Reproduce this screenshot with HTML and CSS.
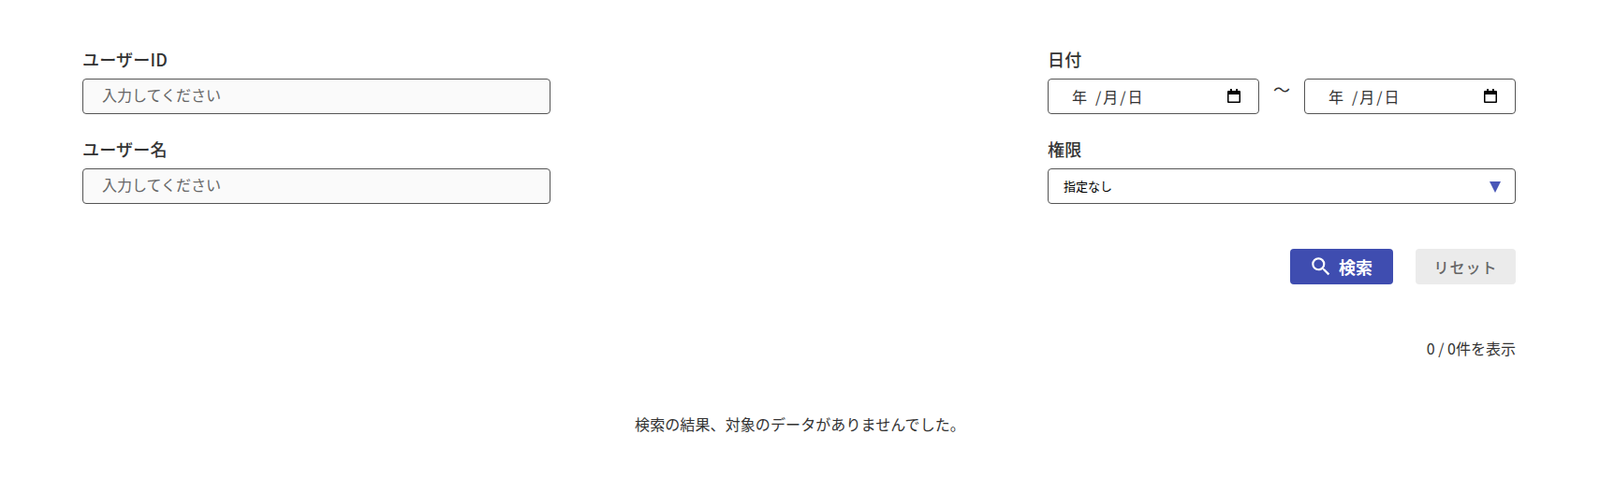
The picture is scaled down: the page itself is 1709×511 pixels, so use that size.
FILE: index.html
```html
<!DOCTYPE html>
<html lang="ja">
<head>
    <meta charset="UTF-8">
    <meta name="viewport" content="width=device-width, initial-scale=1.0">
    <title>ユーザー検索</title>
    <link rel="stylesheet" href="styles.css">
</head>
<body>
<main class="page">
    <form class="search-form">
        <div class="form-columns">
            <div class="form-column">
                <div class="form-group">
                    <label for="user-id">ユーザーID</label>
                    <input class="text-input" type="text" id="user-id" placeholder="入力してください">
                </div>
                <div class="form-group">
                    <label for="user-name">ユーザー名</label>
                    <input class="text-input" type="text" id="user-name" placeholder="入力してください">
                </div>
            </div>
            <div class="form-column">
                <div class="form-group">
                    <label>日付</label>
                    <div class="date-range">
                        <div class="date-input">
                            <span class="date-year">年</span><span class="date-slash">/</span><span>月</span><span class="date-slash">/</span><span>日</span>
                            <svg class="calendar-icon" viewBox="0 0 14 16" width="14" height="16" aria-hidden="true">
                                <path fill="currentColor" d="M3 0h2v2h4V0h2v2h2a1 1 0 0 1 1 1v11a1 1 0 0 1-1 1H1a1 1 0 0 1-1-1V3a1 1 0 0 1 1-1h2zM1.500 6v7.500h11V6z"/>
                            </svg>
                        </div>
                        <span class="date-sep">〜</span>
                        <div class="date-input">
                            <span class="date-year">年</span><span class="date-slash">/</span><span>月</span><span class="date-slash">/</span><span>日</span>
                            <svg class="calendar-icon" viewBox="0 0 14 16" width="14" height="16" aria-hidden="true">
                                <path fill="currentColor" d="M3 0h2v2h4V0h2v2h2a1 1 0 0 1 1 1v11a1 1 0 0 1-1 1H1a1 1 0 0 1-1-1V3a1 1 0 0 1 1-1h2zM1.500 6v7.500h11V6z"/>
                            </svg>
                        </div>
                    </div>
                </div>
                <div class="form-group">
                    <label for="role">権限</label>
                    <div class="select-wrap">
                        <select class="select-input" id="role">
                            <option>指定なし</option>
                        </select>
                        <span class="select-arrow"></span>
                    </div>
                </div>
            </div>
        </div>
        <div class="form-actions">
            <button class="btn btn-search" type="submit">
                <svg class="search-icon" viewBox="0 0 24 24" width="26" height="26" aria-hidden="true">
                    <path fill="currentColor" d="M15.500 14h-.79l-.28-.27A6.470 6.470 0 0 0 16 9.500 6.500 6.500 0 1 0 9.500 16c1.610 0 3.090-.59 4.230-1.570l.27.28v.79l5 4.990L20.490 19l-4.990-5zm-6 0C7.010 14 5 11.990 5 9.500S7.010 5 9.500 5 14 7.010 14 9.500 11.990 14 9.500 14z"/>
                </svg>
                <span>検索</span>
            </button>
            <button class="btn btn-reset" type="reset">リセット</button>
        </div>
    </form>
    <p class="result-count">0 / 0件を表示</p>
    <p class="no-result">検索の結果、対象のデータがありませんでした。</p>
</main>
</body>
</html>
```

FILE: styles.css
```css
* {
    box-sizing: border-box;
}

body {
    margin: 0;
    background-color: #ffffff;
    color: #333333;
    font-family: "Noto Sans CJK JP", "Noto Sans", sans-serif;
}

.page {
    padding: 50px 90px 0 88px;
}

.form-columns {
    display: flex;
    justify-content: space-between;
}

.form-column {
    width: 500px;
}

.form-group {
    margin-bottom: 24px;
}

label {
    display: block;
    height: 30px;
    margin-bottom: 4px;
    font-size: 18px;
    font-weight: 500;
    line-height: 27px;
    letter-spacing: 0.2px;
}

.text-input {
    display: block;
    width: 100%;
    height: 38px;
    padding: 0 20px 4px;
    border: 1px solid #555555;
    border-radius: 4px;
    background-color: #fafafa;
    font-family: inherit;
    font-size: 16px;
}

.text-input::placeholder {
    color: #666666;
}

.date-range {
    display: flex;
    justify-content: space-between;
    align-items: center;
}

.date-input {
    display: flex;
    align-items: center;
    width: 226px;
    height: 38px;
    padding: 0 19px 1px 25px;
    border: 1px solid #555555;
    border-radius: 4px;
    background-color: #ffffff;
    color: #333333;
    font-size: 16px;
}

.date-year {
    margin-right: 7px;
}

.date-slash {
    margin: 0 2px;
}

.calendar-icon {
    margin-left: auto;
    color: #000000;
}

.date-sep {
    margin-top: -16px;
    font-size: 18px;
}

.select-wrap {
    position: relative;
}

.select-input {
    display: block;
    width: 100%;
    height: 38px;
    padding: 0 16px 2px;
    border: 1px solid #555555;
    border-radius: 4px;
    background-color: #ffffff;
    color: #000000;
    font-family: inherit;
    font-size: 13px;
    appearance: none;
}

.select-arrow {
    position: absolute;
    top: 14px;
    right: 16px;
    border-top: 12px solid #4a57b8;
    border-right: 6px solid transparent;
    border-left: 6px solid transparent;
    pointer-events: none;
}

.form-actions {
    display: flex;
    justify-content: flex-end;
    gap: 24px;
    margin-top: 24px;
}

.btn {
    display: flex;
    align-items: center;
    justify-content: center;
    height: 38px;
    border: none;
    border-radius: 4px;
    font-family: inherit;
    font-size: 18px;
    font-weight: 700;
}

.btn-search {
    gap: 6px;
    width: 110px;
    padding: 0 2px 0 0;
    background-color: #3f4db0;
    color: #ffffff;
}

.btn-reset {
    width: 107px;
    background-color: #ebebeb;
    color: #666666;
    font-size: 16px;
    font-weight: 500;
    letter-spacing: 1px;
}

.result-count {
    margin: 56px 0 0;
    font-size: 16px;
    line-height: 24px;
    text-align: right;
}

.no-result {
    margin: 57px 0 0;
    padding-left: 2px;
    font-size: 16px;
    line-height: 24px;
    letter-spacing: 0.1px;
    text-align: center;
}
```
